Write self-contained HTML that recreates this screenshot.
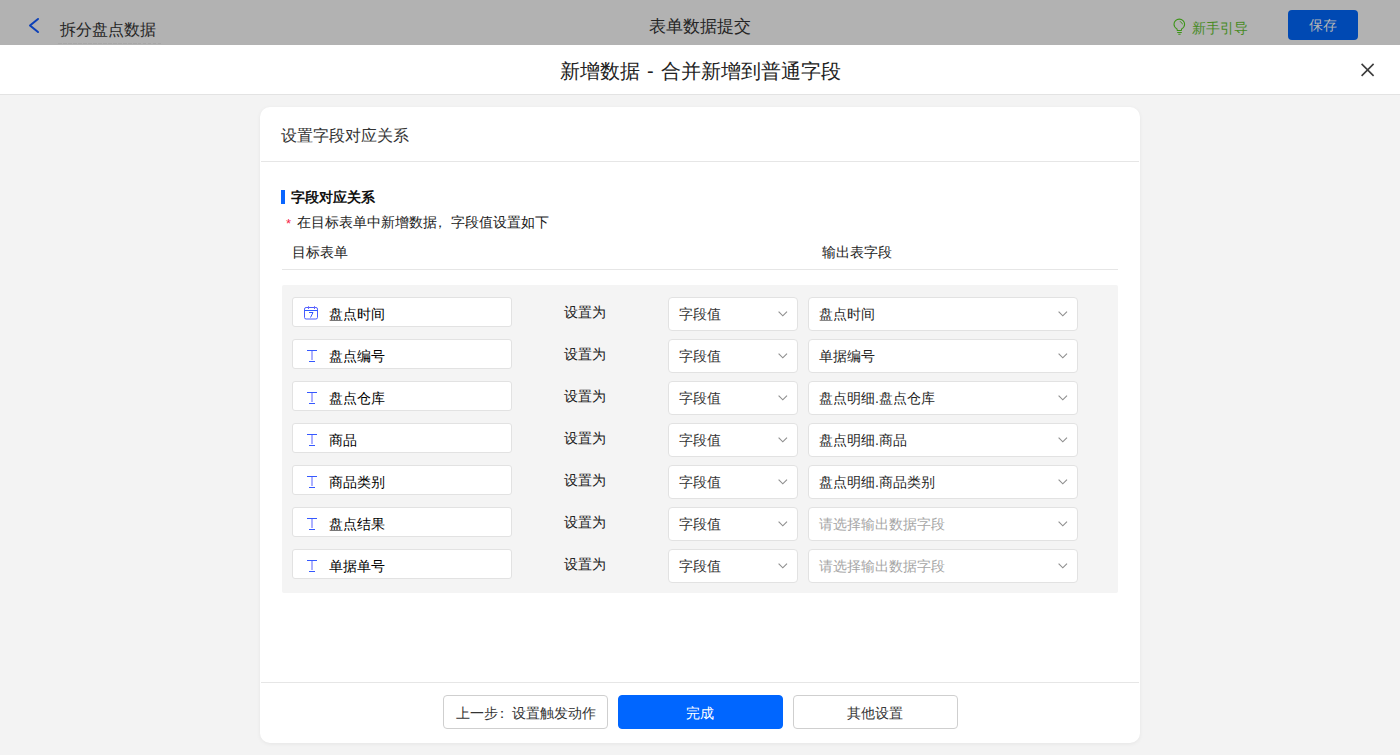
<!DOCTYPE html>
<html><head><meta charset="utf-8">
<style>
*{box-sizing:border-box;margin:0;padding:0}
html,body{width:1400px;height:755px;overflow:hidden}
body{font-family:"Liberation Sans",sans-serif;background:#f3f3f3;position:relative;color:#333;font-size:14px}
.abs{position:absolute}
#topbar{left:0;top:0;width:1400px;height:45px;background:#b2b2b2}
#mhead{left:0;top:45px;width:1400px;height:50px;background:#fff;border-bottom:1px solid #e3e3e3}
#card{left:260px;top:107px;width:880px;height:636px;background:#fff;border-radius:10px;box-shadow:0 1px 4px rgba(0,0,0,0.06)}
.t{position:absolute;white-space:nowrap;line-height:1}
.box{position:absolute;background:#fff;border:1px solid #e2e2e2;border-radius:3px}
.sel{position:absolute;background:#fff;border:1px solid #e2e2e2;border-radius:4px}
.chev{position:absolute}
.btn{position:absolute;top:695px;width:165px;height:34px;border-radius:4px;border:1px solid #cfcfcf;background:#fff;font-size:14px;color:#333}
.btn span{position:absolute;left:0;right:0;top:9.5px;text-align:center;line-height:1;white-space:nowrap}
</style></head><body>
<svg width="0" height="0" style="position:absolute"><defs><linearGradient id="g1" x1="0" y1="0" x2="1" y2="1"><stop offset="0" stop-color="#3d7bff"/><stop offset="1" stop-color="#6a4dff"/></linearGradient></defs></svg>
<div id="topbar" class="abs"></div>
<svg class="abs" style="left:28px;top:17px" width="12" height="17" viewBox="0 0 12 17"><polyline points="10,2 2,8.5 10,15" fill="none" stroke="#0c40b8" stroke-width="2" stroke-linecap="round" stroke-linejoin="round"/></svg>
<div class="t" style="left:60px;top:22px;font-size:16px;color:#252525">拆分盘点数据</div>
<div class="abs" style="left:58px;top:43px;width:104px;height:1px;background:repeating-linear-gradient(90deg,#a8a8a8 0 3.5px,transparent 3.5px 5px)"></div>
<div class="t" style="left:649px;top:18px;font-size:17px;color:#252525">表单数据提交</div>
<svg class="abs" style="left:1173px;top:18px" width="13" height="18" viewBox="0 0 13 18"><path d="M4.3 12.5L3.9 10.9C2.2 9.9 1 8.2 1 6.3C1 3.4 3.4 1.1 6.3 1.1C9.2 1.1 11.6 3.4 11.6 6.3C11.6 8.2 10.4 9.9 8.7 10.9L8.3 12.5ZM4.2 14.4H8.8M5.3 16.3H7.6" fill="none" stroke="#3c9416" stroke-width="1.05"/><path d="M6.8 3.5C8.2 3.9 9.1 4.9 9.4 6.3" fill="none" stroke="#3c9416" stroke-width="1"/></svg>
<div class="t" style="left:1192px;top:20.5px;font-size:14px;color:#478a1f">新手引导</div>
<div class="abs" style="left:1288px;top:10px;width:70px;height:30px;background:#0049b3;border-radius:4px"></div>
<div class="t" style="left:1309px;top:18px;font-size:14px;color:#b5b5b5">保存</div>

<div id="mhead" class="abs"></div>
<div class="t" style="left:560px;top:61px;font-size:20px;word-spacing:1.5px;color:#222">新增数据 - 合并新增到普通字段</div>
<svg class="abs" style="left:1360px;top:62px" width="15" height="15" viewBox="0 0 15 15"><path d="M1.6 1.9L13.6 13.9M13.6 1.9L1.6 13.9" stroke="#3d3d3d" stroke-width="1.6"/></svg>

<div id="card" class="abs"></div>
<div class="t" style="left:281px;top:128px;font-size:16px;color:#333">设置字段对应关系</div>
<div class="abs" style="left:261px;top:161px;width:878px;height:1px;background:#e6e6e6"></div>
<div class="abs" style="left:281px;top:190px;width:4px;height:14px;background:#0a66ff"></div>
<div class="t" style="left:291px;top:190px;font-size:14px;font-weight:bold;color:#111">字段对应关系</div>
<div class="t" style="left:286px;top:217px;font-size:13px;color:#f5224a">*</div>
<div class="t" style="left:297px;top:215px;font-size:14px;color:#222">在目标表单中新增数据<i style="font-style:normal;position:relative;left:-4px">，</i>字段值设置如下</div>
<div class="t" style="left:292px;top:245px;font-size:14px;color:#222">目标表单</div>
<div class="t" style="left:822px;top:245px;font-size:14px;color:#222">输出表字段</div>
<div class="abs" style="left:282px;top:269px;width:836px;height:1px;background:#e6e6e6"></div>
<div class="abs" style="left:282px;top:285px;width:836px;height:308px;background:#f4f4f4;border-radius:2px"></div>
<div class="box" style="left:292px;top:297px;width:220px;height:30px"></div>
<svg class="abs" style="left:304px;top:306px" width="14" height="14" viewBox="0 0 14 14"><rect x="0.5" y="1.5" width="13" height="11.5" rx="1.6" fill="none" stroke="#4a5cff" stroke-width="1"/><path d="M0.5 4.5H13.5" fill="none" stroke="#2f5bff" stroke-width="1"/><path d="M4.5 0.2V3M10.5 0.2V3" fill="none" stroke="#6a62ff" stroke-width="1"/><path d="M5 6.5H9L6.5 11.5" fill="none" stroke="#3558ff" stroke-width="1"/></svg>
<div class="t" style="left:329px;top:307px;font-size:14px;color:#000">盘点时间</div>
<div class="t" style="left:564px;top:305px;font-size:14px;color:#1a1a1a">设置为</div>
<div class="sel" style="left:668px;top:297px;width:130px;height:34px"></div>
<div class="t" style="left:679px;top:307px;font-size:14px;color:#333">字段值</div>
<svg class="chev" style="left:777.5px;top:311px" width="10" height="6" viewBox="0 0 10 6"><polyline points="0.6,0.6 4.8,4.8 9,0.6" fill="none" stroke="#8f8f8f" stroke-width="1.15"/></svg>
<div class="sel" style="left:808px;top:297px;width:270px;height:34px"></div>
<div class="t" style="left:819px;top:307px;font-size:14px;color:#1f1f1f">盘点时间</div>
<svg class="chev" style="left:1057.5px;top:311px" width="10" height="6" viewBox="0 0 10 6"><polyline points="0.6,0.6 4.8,4.8 9,0.6" fill="none" stroke="#8f8f8f" stroke-width="1.15"/></svg>
<div class="box" style="left:292px;top:339px;width:220px;height:30px"></div>
<svg class="abs" style="left:306px;top:349px" width="12" height="14" viewBox="0 0 12 14"><path d="M1 1.5H11M3 12.5H9" fill="none" stroke="#3558ff" stroke-width="1"/><path d="M6 2V11" fill="none" stroke="#5b62ff" stroke-width="1"/></svg>
<div class="t" style="left:329px;top:349px;font-size:14px;color:#000">盘点编号</div>
<div class="t" style="left:564px;top:347px;font-size:14px;color:#1a1a1a">设置为</div>
<div class="sel" style="left:668px;top:339px;width:130px;height:34px"></div>
<div class="t" style="left:679px;top:349px;font-size:14px;color:#333">字段值</div>
<svg class="chev" style="left:777.5px;top:353px" width="10" height="6" viewBox="0 0 10 6"><polyline points="0.6,0.6 4.8,4.8 9,0.6" fill="none" stroke="#8f8f8f" stroke-width="1.15"/></svg>
<div class="sel" style="left:808px;top:339px;width:270px;height:34px"></div>
<div class="t" style="left:819px;top:349px;font-size:14px;color:#1f1f1f">单据编号</div>
<svg class="chev" style="left:1057.5px;top:353px" width="10" height="6" viewBox="0 0 10 6"><polyline points="0.6,0.6 4.8,4.8 9,0.6" fill="none" stroke="#8f8f8f" stroke-width="1.15"/></svg>
<div class="box" style="left:292px;top:381px;width:220px;height:30px"></div>
<svg class="abs" style="left:306px;top:391px" width="12" height="14" viewBox="0 0 12 14"><path d="M1 1.5H11M3 12.5H9" fill="none" stroke="#3558ff" stroke-width="1"/><path d="M6 2V11" fill="none" stroke="#5b62ff" stroke-width="1"/></svg>
<div class="t" style="left:329px;top:391px;font-size:14px;color:#000">盘点仓库</div>
<div class="t" style="left:564px;top:389px;font-size:14px;color:#1a1a1a">设置为</div>
<div class="sel" style="left:668px;top:381px;width:130px;height:34px"></div>
<div class="t" style="left:679px;top:391px;font-size:14px;color:#333">字段值</div>
<svg class="chev" style="left:777.5px;top:395px" width="10" height="6" viewBox="0 0 10 6"><polyline points="0.6,0.6 4.8,4.8 9,0.6" fill="none" stroke="#8f8f8f" stroke-width="1.15"/></svg>
<div class="sel" style="left:808px;top:381px;width:270px;height:34px"></div>
<div class="t" style="left:819px;top:391px;font-size:14px;color:#1f1f1f">盘点明细.盘点仓库</div>
<svg class="chev" style="left:1057.5px;top:395px" width="10" height="6" viewBox="0 0 10 6"><polyline points="0.6,0.6 4.8,4.8 9,0.6" fill="none" stroke="#8f8f8f" stroke-width="1.15"/></svg>
<div class="box" style="left:292px;top:423px;width:220px;height:30px"></div>
<svg class="abs" style="left:306px;top:433px" width="12" height="14" viewBox="0 0 12 14"><path d="M1 1.5H11M3 12.5H9" fill="none" stroke="#3558ff" stroke-width="1"/><path d="M6 2V11" fill="none" stroke="#5b62ff" stroke-width="1"/></svg>
<div class="t" style="left:329px;top:433px;font-size:14px;color:#000">商品</div>
<div class="t" style="left:564px;top:431px;font-size:14px;color:#1a1a1a">设置为</div>
<div class="sel" style="left:668px;top:423px;width:130px;height:34px"></div>
<div class="t" style="left:679px;top:433px;font-size:14px;color:#333">字段值</div>
<svg class="chev" style="left:777.5px;top:437px" width="10" height="6" viewBox="0 0 10 6"><polyline points="0.6,0.6 4.8,4.8 9,0.6" fill="none" stroke="#8f8f8f" stroke-width="1.15"/></svg>
<div class="sel" style="left:808px;top:423px;width:270px;height:34px"></div>
<div class="t" style="left:819px;top:433px;font-size:14px;color:#1f1f1f">盘点明细.商品</div>
<svg class="chev" style="left:1057.5px;top:437px" width="10" height="6" viewBox="0 0 10 6"><polyline points="0.6,0.6 4.8,4.8 9,0.6" fill="none" stroke="#8f8f8f" stroke-width="1.15"/></svg>
<div class="box" style="left:292px;top:465px;width:220px;height:30px"></div>
<svg class="abs" style="left:306px;top:475px" width="12" height="14" viewBox="0 0 12 14"><path d="M1 1.5H11M3 12.5H9" fill="none" stroke="#3558ff" stroke-width="1"/><path d="M6 2V11" fill="none" stroke="#5b62ff" stroke-width="1"/></svg>
<div class="t" style="left:329px;top:475px;font-size:14px;color:#000">商品类别</div>
<div class="t" style="left:564px;top:473px;font-size:14px;color:#1a1a1a">设置为</div>
<div class="sel" style="left:668px;top:465px;width:130px;height:34px"></div>
<div class="t" style="left:679px;top:475px;font-size:14px;color:#333">字段值</div>
<svg class="chev" style="left:777.5px;top:479px" width="10" height="6" viewBox="0 0 10 6"><polyline points="0.6,0.6 4.8,4.8 9,0.6" fill="none" stroke="#8f8f8f" stroke-width="1.15"/></svg>
<div class="sel" style="left:808px;top:465px;width:270px;height:34px"></div>
<div class="t" style="left:819px;top:475px;font-size:14px;color:#1f1f1f">盘点明细.商品类别</div>
<svg class="chev" style="left:1057.5px;top:479px" width="10" height="6" viewBox="0 0 10 6"><polyline points="0.6,0.6 4.8,4.8 9,0.6" fill="none" stroke="#8f8f8f" stroke-width="1.15"/></svg>
<div class="box" style="left:292px;top:507px;width:220px;height:30px"></div>
<svg class="abs" style="left:306px;top:517px" width="12" height="14" viewBox="0 0 12 14"><path d="M1 1.5H11M3 12.5H9" fill="none" stroke="#3558ff" stroke-width="1"/><path d="M6 2V11" fill="none" stroke="#5b62ff" stroke-width="1"/></svg>
<div class="t" style="left:329px;top:517px;font-size:14px;color:#000">盘点结果</div>
<div class="t" style="left:564px;top:515px;font-size:14px;color:#1a1a1a">设置为</div>
<div class="sel" style="left:668px;top:507px;width:130px;height:34px"></div>
<div class="t" style="left:679px;top:517px;font-size:14px;color:#333">字段值</div>
<svg class="chev" style="left:777.5px;top:521px" width="10" height="6" viewBox="0 0 10 6"><polyline points="0.6,0.6 4.8,4.8 9,0.6" fill="none" stroke="#8f8f8f" stroke-width="1.15"/></svg>
<div class="sel" style="left:808px;top:507px;width:270px;height:34px"></div>
<div class="t" style="left:819px;top:517px;font-size:14px;color:#a6a6a6">请选择输出数据字段</div>
<svg class="chev" style="left:1057.5px;top:521px" width="10" height="6" viewBox="0 0 10 6"><polyline points="0.6,0.6 4.8,4.8 9,0.6" fill="none" stroke="#8f8f8f" stroke-width="1.15"/></svg>
<div class="box" style="left:292px;top:549px;width:220px;height:30px"></div>
<svg class="abs" style="left:306px;top:559px" width="12" height="14" viewBox="0 0 12 14"><path d="M1 1.5H11M3 12.5H9" fill="none" stroke="#3558ff" stroke-width="1"/><path d="M6 2V11" fill="none" stroke="#5b62ff" stroke-width="1"/></svg>
<div class="t" style="left:329px;top:559px;font-size:14px;color:#000">单据单号</div>
<div class="t" style="left:564px;top:557px;font-size:14px;color:#1a1a1a">设置为</div>
<div class="sel" style="left:668px;top:549px;width:130px;height:34px"></div>
<div class="t" style="left:679px;top:559px;font-size:14px;color:#333">字段值</div>
<svg class="chev" style="left:777.5px;top:563px" width="10" height="6" viewBox="0 0 10 6"><polyline points="0.6,0.6 4.8,4.8 9,0.6" fill="none" stroke="#8f8f8f" stroke-width="1.15"/></svg>
<div class="sel" style="left:808px;top:549px;width:270px;height:34px"></div>
<div class="t" style="left:819px;top:559px;font-size:14px;color:#a6a6a6">请选择输出数据字段</div>
<svg class="chev" style="left:1057.5px;top:563px" width="10" height="6" viewBox="0 0 10 6"><polyline points="0.6,0.6 4.8,4.8 9,0.6" fill="none" stroke="#8f8f8f" stroke-width="1.15"/></svg>
<div class="abs" style="left:261px;top:682px;width:878px;height:1px;background:#e6e6e6"></div>
<div class="btn" style="left:443px"><span>上一步<i style="font-style:normal;position:relative;left:-3px">：</i>设置触发动作</span></div>
<div class="btn" style="left:618px;background:#0066ff;border-color:#0066ff;color:#fff"><span style="left:-2px">完成</span></div>
<div class="btn" style="left:793px"><span style="left:-1px">其他设置</span></div>
</body></html>
